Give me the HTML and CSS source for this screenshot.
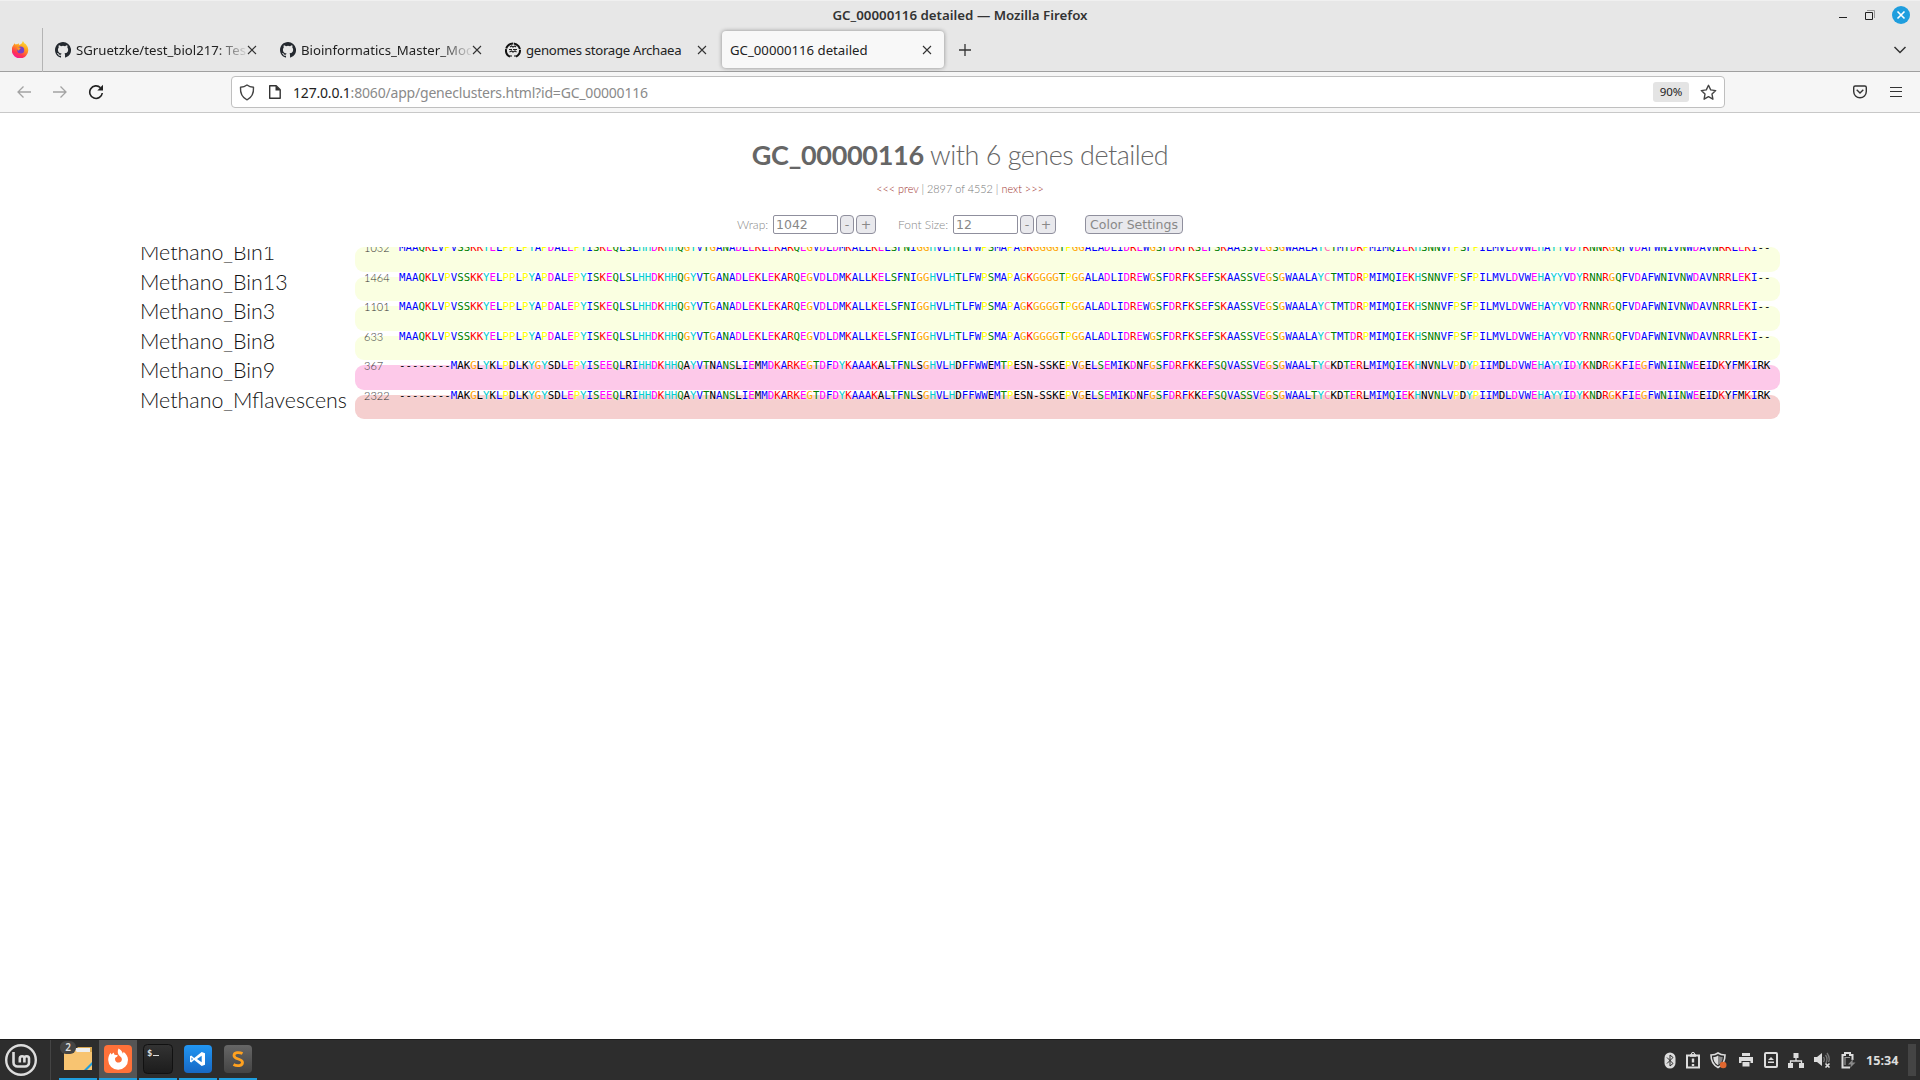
FILE: index.html
```
<!DOCTYPE html>
<html lang="en">
<head>
<meta charset="utf-8">
<title>GC_00000116 detailed</title>
<link rel="stylesheet" href="styles.css">
</head>
<body>
<svg class="defs" width="0" height="0">
  <symbol id="github" viewBox="0 0 16 16"><path d="M8 0C3.58 0 0 3.58 0 8c0 3.54 2.29 6.53 5.47 7.59.4.07.55-.17.55-.38v-1.49c-2.01.37-2.53-.49-2.69-.94-.09-.23-.48-.94-.82-1.13-.28-.15-.68-.52-.01-.53.63-.01 1.08.58 1.23.82.72 1.21 1.87.87 2.33.66.07-.52.28-.87.51-1.07-1.78-.2-3.64-.89-3.64-3.95 0-.87.31-1.59.82-2.15-.08-.2-.36-1.02.08-2.12 0 0 .67-.21 2.2.82a7.6 7.6 0 0 1 4 0c1.53-1.04 2.2-.82 2.2-.82.44 1.1.16 1.92.08 2.12.51.56.82 1.27.82 2.15 0 3.07-1.87 3.75-3.65 3.95.29.25.54.73.54 1.48v2.2c0 .21.15.46.55.38A8 8 0 0 0 8 0z"/></symbol>
  <symbol id="close" viewBox="0 0 10 10"><path d="M1 1l8 8M9 1L1 9" fill="none" stroke="#333" stroke-width="1.1"/></symbol>
</svg>

<header class="titlebar">
  <span class="fit window-title">GC_00000116 detailed — Mozilla Firefox</span>
  <div class="window-buttons">
    <svg width="10" height="18" viewBox="0 0 10 18"><path d="M1 11.5h8" stroke="#222"/></svg>
    <svg width="12" height="18" viewBox="0 0 12 18"><path d="M3 4.5h7.5v7.5" fill="none" stroke="#999"/><path d="M1.500 6.500h7v7h-7z" fill="none" stroke="#222"/></svg>
    <svg width="18" height="18" viewBox="0 0 18 18"><circle cx="9" cy="9" r="9" fill="#1f9ede"/><path d="M5.500 5.500l7 7M12.500 5.500l-7 7" stroke="#fff" stroke-width="1.600"/></svg>
  </div>
</header>

<nav class="tabs">
  <div class="pinned">
    <svg width="17" height="17" viewBox="0 0 16 16">
      <defs><linearGradient id="fox" x1=".8" y1="0" x2=".3" y2="1"><stop offset="0" stop-color="#ffe43a"/><stop offset=".4" stop-color="#ff9b1c"/><stop offset=".75" stop-color="#ff3550"/><stop offset="1" stop-color="#f5159c"/></linearGradient></defs>
      <path d="M10.200 0c.9 1 1.200 2 2 2.700.4-.1.7.1 1 .5A7.800 7.800 0 1 1 1.600 3.500c.2-.7.5-1.200.9-1.500l.6 1.300c.6-.3 1.200-.3 1.900-.2l1.300-1.100.3 1.700C8 3.500 9.500 2.500 10.200 0z" fill="url(#fox)"/>
      <circle cx="8.200" cy="8.400" r="3.300" fill="#7840c8"/><path d="M4.800 6.200c1.500-.6 2.500 0 3.400.5-.3 1.100-1.500 1.200-1.700 2.200-1 .3-1.800-1-1.700-2.700z" fill="#ff9a20"/>
    </svg>
  </div>
  <div class="tab"><svg class="favicon"><use href="#github"/></svg><span class="tab-title fade"><span class="fit">SGruetzke/test_biol217: Tes</span></span><svg class="close"><use href="#close"/></svg></div>
  <div class="tab"><svg class="favicon"><use href="#github"/></svg><span class="tab-title fade"><span class="fit">Bioinformatics_Master_Mod</span></span><svg class="close"><use href="#close"/></svg></div>
  <div class="tab"><svg class="favicon" viewBox="0 0 16 16"><path d="M5 14.700A7 7 0 1 1 11 14.700" fill="none" stroke="#111" stroke-width="2" stroke-dasharray="9 .7"/><path d="M5 5l1.500-1L8 5l2-1 1 1M4 7.500h3M8 7.500h4M4.500 10l2-1 1.500 1 2-1 1.500 1M6 13v2M10 13v2" fill="none" stroke="#222" stroke-width="1.100"/></svg><span class="tab-title"><span class="fit condensed">genomes storage Archaea</span></span><svg class="close"><use href="#close"/></svg></div>
  <div class="tab active"><span class="tab-title"><span class="fit">GC_00000116 detailed</span></span><svg class="close"><use href="#close"/></svg></div>
  <svg class="new-tab" viewBox="0 0 12 12"><path d="M6 0v12M0 6h12" stroke="#333" stroke-width="1.300"/></svg>
  <svg class="all-tabs" viewBox="0 0 14 8"><path d="M1.500 1L7 6.500 12.500 1" fill="none" stroke="#333" stroke-width="1.500"/></svg>
</nav>

<div class="toolbar">
  <div class="nav-buttons">
    <svg width="16" height="14" viewBox="0 0 16 14"><path d="M15 7H2M7.500 1.500L2 7l5.500 5.500" fill="none" stroke="#a3a3a3" stroke-width="1.300"/></svg>
    <svg width="16" height="14" viewBox="0 0 16 14"><path d="M1 7h13M8.500 1.500L14 7l-5.500 5.500" fill="none" stroke="#a3a3a3" stroke-width="1.300"/></svg>
    <svg width="16" height="16" viewBox="0 0 16 16"><path d="M12.500 3.700A6.300 6.300 0 1 0 14.300 9" fill="none" stroke="#222" stroke-width="1.600"/><path d="M15 .8v5.700H9.300z" fill="#222"/></svg>
  </div>
  <div class="urlbar">
    <svg width="16" height="17" viewBox="0 0 16 17"><path d="M8 1c2 1.600 4 2.200 6.500 2.300.3 5-1 10-6.500 12.500C2.500 13.300 1.200 8.300 1.500 3.300 4 3.200 6 2.600 8 1z" fill="none" stroke="#444" stroke-width="1.400" stroke-linejoin="round"/></svg>
    <svg class="page" width="14" height="16" viewBox="0 0 14 16"><path d="M1.700 1.700h6.500l4 4v8.600H1.700z" fill="none" stroke="#333" stroke-width="1.400" stroke-linejoin="round"/><path d="M7.500 1.500v5h5z" fill="#333"/></svg>
    <span class="url"><span class="fit"><b>127.0.0.1</b>:8060/app/geneclusters.html?id=GC_00000116</span></span>
    <span class="zoom">90%</span>
    <svg width="17" height="17" viewBox="0 0 17 17"><path d="M8.500 1.300l2.200 4.600 5 .7-3.700 3.500.9 5.100-4.400-2.500-4.400 2.500.9-5.100L1.300 6.600l5-.7z" fill="none" stroke="#444" stroke-width="1.400" stroke-linejoin="round"/></svg>
  </div>
  <div class="tools">
    <svg width="14" height="14" viewBox="0 0 14 14"><path d="M2.200 1h9.600q1.500 0 1.500 1.500V6.500a6.300 6.300 0 0 1-12.600 0V2.500Q.7 1 2.200 1z" fill="none" stroke="#333" stroke-width="1.400"/><path d="M3.700 4.800L7 8l3.300-3.200" fill="none" stroke="#333" stroke-width="1.400"/></svg>
    <svg width="12" height="12" viewBox="0 0 12 12"><path d="M0 1.500h12M0 5.500h12M0 10.500h12" stroke="#333" stroke-width="1.200"/></svg>
  </div>
</div>

<main>
  <h1><span class="fit"><b>GC_00000116</b> with 6 genes detailed</span></h1>
  <p class="pager"><span class="fit"><a>&lt;&lt;&lt; prev</a> | 2897 of 4552 | <a>next &gt;&gt;&gt;</a></span></p>
  <form class="settings">
    <label>Wrap:</label><span class="input">1042</span><span class="btn minus">-</span><span class="btn plus">+</span>
    <label class="size-label">Font Size:</label><span class="input">12</span><span class="btn minus">-</span><span class="btn plus">+</span>
    <span class="btn colors"><span class="fit">Color Settings</span></span>
  </form>
  <section class="alignment" id="alignment"></section>
</main>

<footer class="taskbar">
  <svg class="mint" width="32" height="32" viewBox="0 0 32 32"><circle cx="16" cy="16" r="14.800" fill="none" stroke="#ddd" stroke-width="2.400"/><path d="M8.500 8v10.500a4 4 0 0 0 4 4h7.500a4 4 0 0 0 4-4V14.500a2.300 2.300 0 0 0-4.600 0V18.500M19.400 14.500a2.300 2.300 0 0 0-4.600 0V18.500" fill="none" stroke="#ddd" stroke-width="2.600"/></svg>
  <i class="divider"></i>
  <div class="app"><svg width="28" height="24" viewBox="0 0 28 24"><path d="M0 2h12l2-2h14v23H0z" fill="#d8a650"/><path d="M2 1h24v6H2z" fill="#eee"/><path d="M0 3.500h11.500L13 5h15v18H0z" fill="#f8c471"/><path d="M20 23l8-8v3l-5 5z" fill="#1f9ede"/></svg><em>2</em></div>
  <div class="app current"><svg width="28" height="28" viewBox="0 0 28 28"><rect width="28" height="28" rx="4" fill="#ff7139"/><path d="M14.500 3.500c3 1.500 3.800 3.300 4.200 5 .6-.4.8-1.300.8-1.800 2.800 2.300 4.500 5 4.500 8A9.900 9.900 0 0 1 4.200 15c0-3 .9-5.500 2.400-7.300l.9 1.700L9.600 7.600l.9 2.200 3.300.4c0 1.800-2.300 1.700-2.800 3.200-.3 3 2 4.600 4.300 4.100 3.200-.9 3.400-4.700.6-6.300-2.200-1.500-2.800-4.700-1.400-7.700z" fill="#fff"/></svg></div>
  <div class="app"><svg width="30" height="30" viewBox="0 0 30 30"><defs><linearGradient id="term" x2="0" y2="1"><stop stop-color="#333"/><stop offset="1" stop-color="#1c1c1c"/></linearGradient></defs><rect x=".5" y=".5" width="29" height="29" rx="4" fill="url(#term)" stroke="#111"/><text x="4" y="12" class="prompt">$</text><path d="M10 11.500h6" stroke="#ddd"/></svg></div>
  <div class="app"><svg width="28" height="28" viewBox="0 0 28 28"><defs><linearGradient id="code" x2="0" y2="1"><stop stop-color="#2196f3"/><stop offset="1" stop-color="#1768c4"/></linearGradient></defs><rect width="28" height="28" rx="4" fill="url(#code)"/><path d="M7.200 10.500l3 2.500 7.500-6 3.300 1.300v11.400L17.700 21l-7.500-6-3 2.500-1.200-.7v-5.600zM17.700 10.800L13 14l4.700 3.200zM7.500 12.600v2.800L9 14z" fill="#fff" fill-rule="evenodd"/></svg></div>
  <div class="app"><svg width="28" height="28" viewBox="0 0 28 28"><defs><linearGradient id="subl" x2="0" y2="1"><stop stop-color="#666"/><stop offset="1" stop-color="#444"/></linearGradient></defs><rect width="28" height="28" rx="4" fill="url(#subl)"/><path d="M18.500 8.500c-3-1.500-8.500-1.500-8.500 2 0 4.500 8.500 2.500 8.500 7 0 3.500-5.500 4-9 2" fill="none" stroke="#ffa11f" stroke-width="2.800"/></svg></div>
  <div class="tray">
    <svg width="12" height="17" viewBox="0 0 12 17"><rect x=".5" y=".5" width="11" height="16" rx="5.500" fill="#ddd"/><path d="M3 5.500l6 6-3 2.500V3l3 2.500-6 6" fill="none" stroke="#2d2d2d"/></svg>
    <svg width="14" height="17" viewBox="0 0 14 17"><path d="M1 3.500h12V15.500H1z" fill="none" stroke="#ddd" stroke-width="2"/><path d="M4 3.500h6M7 6.500v4M7 12v2" stroke="#ddd" stroke-width="2.400"/><circle cx="7" cy="2" r="1.600" fill="none" stroke="#ddd"/></svg>
    <svg width="17" height="17" viewBox="0 0 17 17"><path d="M8 1c2 1.500 4 2 7 2 0 6-2 10-7 12.500C3 13 1 9 1 3c3 0 5-.5 7-2z" fill="none" stroke="#ddd" stroke-width="1.600"/><path d="M8 3.500c1.500 1 3 1.500 4.700 1.500 0 4-1.700 6.500-4.700 8.300z" fill="#888"/><path d="M8 3.500C6.500 4.500 5 5 3.300 5c0 4 1.700 6.500 4.700 8.300z" fill="#ddd"/><circle cx="13.200" cy="13" r="3.300" fill="#e0672f"/></svg>
    <svg class="spaced" width="14" height="14" viewBox="0 0 14 14"><path d="M3 0h8v3H3zM0 4h14v6h-2.500V8h-9v2H0zM3.500 9h7v4.500h-7z" fill="#ddd"/></svg>
    <svg class="spaced" width="14" height="16" viewBox="0 0 14 16"><rect x="1" y="1" width="12" height="14" rx="1" fill="none" stroke="#ddd" stroke-width="2"/><path d="M4 8l3-3 3 3zM4 9.500h6v1.500H4z" fill="#ddd"/></svg>
    <svg width="16" height="16" viewBox="0 0 16 16"><path d="M5.500 1h5v5h-5zM0 11h5v5H0zM11 11h5v5h-5z" fill="#ddd"/><path d="M8 6v3M2.500 11V9h11v2" fill="none" stroke="#ddd" stroke-width="1.300"/></svg>
    <svg width="17" height="16" viewBox="0 0 17 16"><path d="M0 5h3l5-4v13l-5-4H0z" fill="#ddd"/><path d="M9.500 5c1 1.500 1 3.500 0 5M11.500 3c2 2.500 2 5 .5 8M13 1c2.500 3.500 3 6 1.500 9" fill="none" stroke="#777" stroke-width="1.300"/><path d="M11.500 11.500l4 4M15.500 11.500l-4 4" stroke="#ddd" stroke-width="1.600"/></svg>
    <svg width="15" height="17" viewBox="0 0 15 17"><path d="M9 15.500H1.500V3H4V1h5v2h2.500v5" fill="none" stroke="#ddd" stroke-width="2"/><path d="M4 13V5.500h5" fill="none" stroke="#999" stroke-width="1.200"/><path d="M12 7l-5 5.500h3L9 16l5.500-5.500H11.500z" fill="#888"/></svg>
    <span class="fit clock">15:34</span>
    <i class="show-desktop"></i>
  </div>
</footer>
<script src="app.js"></script>
</body>
</html>
```
FILE: styles.css
```
* { box-sizing: border-box; }
body {
  margin: 0;
  width: 1920px;
  height: 1080px;
  overflow: hidden;
  display: flex;
  flex-direction: column;
  background: #fff;
  color: #222;
  font: 13.2px "Noto Sans", sans-serif;
}
svg { display: block; flex: none; }
.defs { position: absolute; }
.fit { display: inline-block; white-space: nowrap; }

.titlebar {
  height: 28px;
  display: grid;
  grid-template-columns: 1fr auto 1fr;
  align-items: center;
  background: #e7e7e7;
  border-top: 1px solid #f0f0f0;
}
.window-title { grid-column: 2; font-weight: 600; font-size: 13.3px; color: #333; }
.window-buttons { display: flex; justify-content: flex-end; gap: 16px; padding-right: 10px; }

.tabs {
  height: 44px;
  display: flex;
  align-items: center;
  background: #e7e7e7;
  border-bottom: 1px solid #a0a0a0;
}
.pinned { width: 43px; height: 44px; display: flex; align-items: center; padding-left: 12px; border-right: 1px solid #b4b4b4; }
.tab { width: 225px; display: flex; align-items: center; padding-left: 12px; }
.favicon { width: 16px; height: 16px; margin-right: 5px; fill: #24292f; }
.tab-title { width: 170px; overflow: hidden; white-space: nowrap; }
.condensed { letter-spacing: -.3px; }
.fade { mask-image: linear-gradient(to right, #000 82%, transparent 102%); }
.close { width: 10px; height: 10px; margin-left: 1px; }
.tab.active { width: 222px; height: 37px; margin-left: 4px; padding-left: 8px; background: #f8f8f8; border-radius: 4px; box-shadow: 0 0 4px rgba(0, 0, 0, .4); }
.tab.active .tab-title { width: 191px; }
.new-tab { width: 12px; height: 12px; margin-left: 15px; }
.all-tabs { width: 14px; height: 8px; margin: 0 13px 0 auto; }

.toolbar {
  height: 41px;
  display: flex;
  align-items: center;
  background: #f6f6f6;
  border-bottom: 1px solid #c8c8c8;
}
.nav-buttons { width: 231px; display: flex; align-items: center; gap: 20px; padding-left: 16px; }
.urlbar {
  width: 1494px;
  height: 32px;
  display: flex;
  align-items: center;
  padding: 0 7px;
  background: #fff;
  border: 1px solid #bfbfbf;
  border-radius: 4px;
}
.page { margin: 0 11px 0 13px; }
.url { flex: 1; color: #8a8a8a; font-size: 14px; letter-spacing: -.19px; }
.url b { font-weight: 400; color: #222; }
.zoom { width: 36px; height: 20px; margin-right: 11px; border-radius: 3px; background: #e4e4e4; font-size: 11.500px; line-height: 20px; text-align: center; }
.tools { display: flex; align-items: center; gap: 23px; margin-left: auto; padding-right: 18px; }

main {
  flex: 1;
  display: flex;
  flex-direction: column;
  align-items: center;
  font-family: Lato, sans-serif;
}
h1 { margin: 24px 0 0; height: 36px; line-height: 35px; font-size: 27px; font-weight: 300; color: #666; letter-spacing: -.5px; }
h1 b { font-weight: 700; color: #666; letter-spacing: -.3px; }
.pager { margin: 8px 0 0; height: 16px; line-height: 16px; font-size: 10.900px; font-weight: 300; color: #777; }
.pager a { color: #a03430; }
.settings { width: 446px; height: 19px; margin-top: 18px; display: flex; align-items: center; font-size: 12px; font-weight: 300; color: #888; }
.settings label { width: 36px; white-space: nowrap; }
.settings .size-label { width: 55px; margin-left: 22px; }
.input, .btn { height: 19px; border: 1px solid #8f8f9d; font: 12.500px/18px "DejaVu Sans", sans-serif; color: #888; }
.input { width: 65px; padding-left: 2px; border-radius: 2px; }
.btn { border-radius: 4px; background: #e9e9ed; text-align: center; }
.minus { width: 14px; margin-left: 2px; }
.plus { width: 20px; margin-left: 2px; }
.colors { width: 98px; margin-left: auto; }

.alignment { width: 1640px; height: 176px; margin-top: 13px; overflow: hidden; }
.row { display: flex; height: 29.500px; }
.row:first-child { margin-top: -5px; }
.name { width: 215px; font-size: 21.400px; line-height: 21px; font-weight: 300; color: #111; white-space: nowrap; }
.band { width: 1425px; height: 24.700px; margin-top: 5px; display: flex; padding-left: 9px; border-radius: 9px; }
.band > span { margin-top: -7.600px; line-height: 18px; white-space: pre; }
.caller { width: 35px; font-size: 11px; font-weight: 300; color: #333; }
.seq { font-family: "DejaVu Sans Mono", monospace; font-size: 10.800px; letter-spacing: -.037px; color: #000; text-shadow: 0 0 2px #fff; }
.lime { background: #faffe1; }
.pink { background: #fdc9e9; }
.rose { background: #f5cfcf; }
.c-hyd { color: #00f; }
.c-pos { color: #f00; }
.c-neg { color: #f0f; }
.c-pol { color: #008000; }
.c-cys { color: #ff69b4; }
.c-gly { color: #ffa500; }
.c-pro { color: #ff0; }
.c-aro { color: #00ced1; }

.taskbar {
  height: 41px;
  display: flex;
  align-items: center;
  background: #2d2d2d;
  border-top: 1px solid #1c1c1c;
  padding-left: 5px;
}
.divider { width: 1px; height: 40px; margin: 0 8px 0 13px; background: #444; }
.app { position: relative; width: 38px; height: 40px; margin-right: 2px; display: flex; align-items: center; justify-content: center; border-bottom: 2px solid #1f9ede; }
.current { background: #555; }
.app em { position: absolute; left: 1px; top: 1px; width: 16px; height: 13px; border-radius: 6px; background: #444; color: #ddd; font: 600 10px/13px "Noto Sans", sans-serif; text-align: center; }
.prompt { font: bold 9px "DejaVu Sans Mono", monospace; fill: #ddd; }
.tray { display: flex; align-items: center; margin-left: auto; gap: 10px; padding-right: 4px; }
.spaced { margin-left: 1.500px; }
.clock { width: 34px; margin-right: -2px; color: #ddd; font-weight: 700; font-size: 12.600px; }
.show-desktop { width: 8px; height: 32px; background: #444; }
```
FILE: app.js
```
const CLASSES = { hyd: "AILMFWV", pos: "KR", neg: "ED", pol: "NQST", cys: "C", gly: "G", pro: "P", aro: "HY" };

const SEQ_A = "MAAQKLVPVSSKKYELPPLPYAPDALEPYISKEQLSLHHDKHHQGYVTGANADLEKLEKARQEGVDLDMKALLKELSFNIGGHVLHTLFWPSMAPAGKGGGGTPGGALADLIDREWGSFDRFKSEFSKAASSVEGSGWAALAYCTMTDRPMIMQIEKHSNNVFPSFPILMVLDVWEHAYYVDYRNNRGQFVDAFWNIVNWDAVNRRLEKI--";
const SEQ_B = "--------MakGlYkLPdLkYGYsdLEPYISEEQLrIHHDKHHQaYVTnANSlIEmMDKARKEGTDFDYKAAAKaLTFNLsGHVLHdFFWWeMTPesn-sskePvGeLSEMIkDnFGSFDRFKkEFSQVASSVEGSGWAALTYCkdTERlMIMQIEKHnvNLVPdYPIIMdLDVWEHAYYIDYKNdRGKFIEGFWNIINWEeIdKyFmKIrk";

const ROWS = [
  ["Methano_Bin1", "1032", SEQ_A, "lime"],
  ["Methano_Bin13", "1464", SEQ_A, "lime"],
  ["Methano_Bin3", "1101", SEQ_A, "lime"],
  ["Methano_Bin8", "633", SEQ_A, "lime"],
  ["Methano_Bin9", "367", SEQ_B, "pink"],
  ["Methano_Mflavescens", "2322", SEQ_B, "rose"],
];

function colorize(seq) {
  return [...seq].map(ch => {
    const cls = Object.keys(CLASSES).find(k => CLASSES[k].includes(ch));
    return cls ? `<span class="c-${cls}">${ch}</span>` : ch.toUpperCase();
  }).join("");
}

document.getElementById("alignment").innerHTML = ROWS.map(([name, caller, seq, tone]) =>
  `<div class="row"><div class="name">${name}</div><div class="band ${tone}"><span class="caller">${caller}</span><span class="seq">${colorize(seq)}</span></div></div>`
).join("");
```
